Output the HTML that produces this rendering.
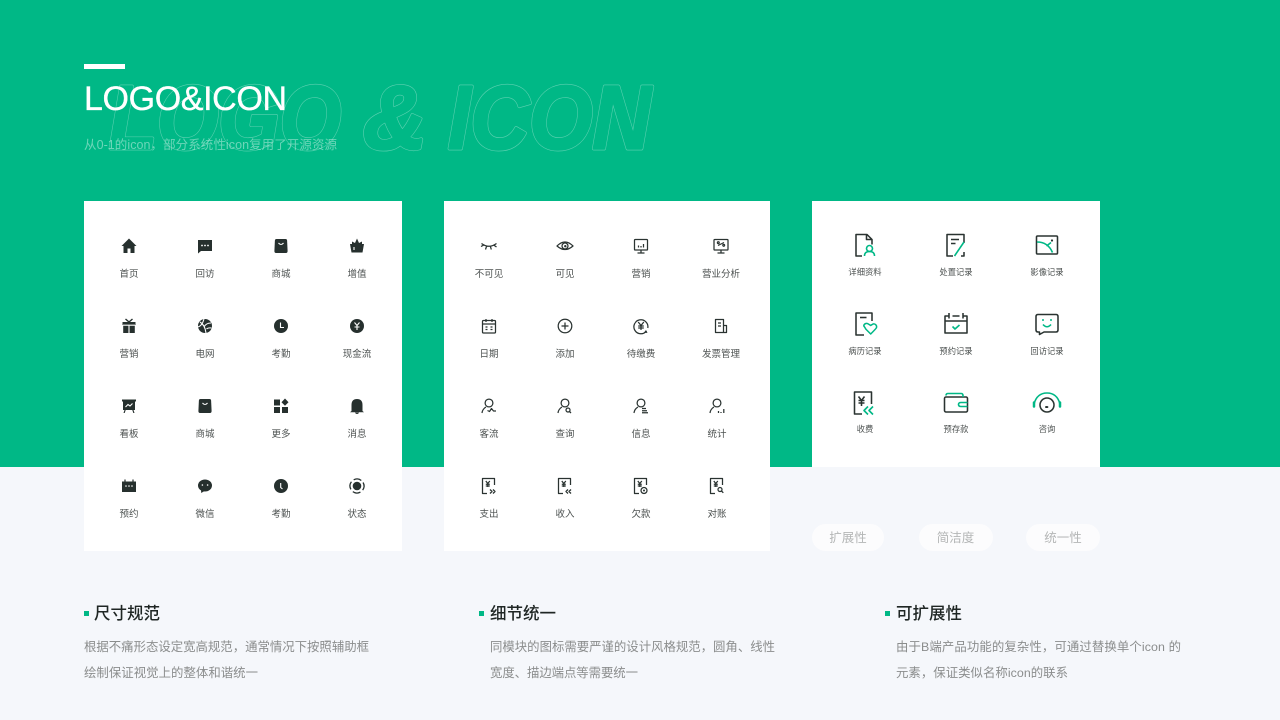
<!DOCTYPE html>
<html lang="zh"><head><meta charset="utf-8"><title>LOGO&amp;ICON</title>
<style>
html,body{margin:0;padding:0;width:1280px;height:720px;overflow:hidden;background:#f5f7fb}
svg{display:block;font-family:"Liberation Sans","Noto Sans CJK SC",sans-serif;filter:blur(.3px)}
.l text{font-size:9.5px;fill:#4c5150;text-anchor:middle}
.m text{font-size:8.3px;fill:#4c5150;text-anchor:middle}
.f{fill:#26302e;stroke:none}
.w{stroke:#fff;fill:none;stroke-width:1.1}
.wf{fill:#fff;stroke:none}
.o{fill:none;stroke:#2a3331;stroke-width:1.25;stroke-linejoin:round}
.b{fill:none;stroke:#2a3331;stroke-width:1.55;stroke-linejoin:round}
.g{fill:none;stroke:#00b886;stroke-width:1.6;stroke-linejoin:round}
.h{font-size:16.5px;font-weight:500;fill:#1f2624}
.p{font-size:12.4px;fill:#8b8d8d}
.pill{font-size:12.5px;fill:#b4b6b6;text-anchor:middle}
.gh1{fill:none;stroke:#fff;stroke-opacity:.36;stroke-width:3.8;stroke-linejoin:round}
.gh2{fill:#00b886;stroke:#00b886;stroke-width:2.6;stroke-linejoin:round}
.gt{font-size:90px;font-weight:700;font-style:italic}
</style></head><body>
<svg width="1280" height="720" viewBox="0 0 1280 720" xmlns="http://www.w3.org/2000/svg">
<defs>
<g id="bag"><path class="f" d="M-4.500-7H4.500Q6-7 6.100-5.500L6.600 5Q6.600 7 5 7H-5Q-6.600 7-6.600 5L-6.100-5.500Q-6-7-4.500-7Z"/><path class="w" d="M-2.500-3Q0 0 2.500-3"/></g>
<g id="doc"><path class="o" d="M-2 7.500H-6.500V-7.500H5.500V-1M-6.500-7.500V7.500"/><path class="o" d="M-3.200-5L-1.200-2.500L.8-5M-1.200-2.500V1M-3.200-1.800H.8M-3.200 0H.8"/></g>
<g id="head"><circle class="o" cx="0" cy="-3" r="3.900"/><path class="o" d="M-7 7Q-6.500 3-3 1"/></g>
</defs>
<rect x="0" y="0" width="1280" height="467" fill="#00b886"/>
<g class="gt">
<text class="gh1" x="109" y="148.500" textLength="232" lengthAdjust="spacingAndGlyphs">LOGO</text>
<text class="gh1" x="363" y="148.500" textLength="64" lengthAdjust="spacingAndGlyphs">&amp;</text>
<text class="gh1" x="448" y="148.500" textLength="203" lengthAdjust="spacingAndGlyphs">ICON</text>
<text class="gh2" x="109" y="148.500" textLength="232" lengthAdjust="spacingAndGlyphs">LOGO</text>
<text class="gh2" x="363" y="148.500" textLength="64" lengthAdjust="spacingAndGlyphs">&amp;</text>
<text class="gh2" x="448" y="148.500" textLength="203" lengthAdjust="spacingAndGlyphs">ICON</text>
</g>
<rect x="84" y="64" width="41" height="5" fill="#fff"/>
<text x="84" y="110" font-size="34" fill="#fff" stroke="#fff" stroke-width=".35" textLength="203">LOGO&amp;ICON</text>
<text x="84" y="149" font-size="12.500" fill="#fff" fill-opacity=".42" textLength="253">从0-1的icon，部分系统性icon复用了开源资源</text>
<rect x="84" y="201" width="318" height="350" fill="#fff"/>
<rect x="444" y="201" width="326" height="350" fill="#fff"/>
<rect x="812" y="201" width="288" height="266" fill="#fff"/>

<g class="l">
<text x="129" y="277">首页</text><text x="205" y="277">回访</text><text x="281" y="277">商城</text><text x="357" y="277">增值</text>
<text x="129" y="357">营销</text><text x="205" y="357">电网</text><text x="281" y="357">考勤</text><text x="357" y="357">现金流</text>
<text x="129" y="437">看板</text><text x="205" y="437">商城</text><text x="281" y="437">更多</text><text x="357" y="437">消息</text>
<text x="129" y="517">预约</text><text x="205" y="517">微信</text><text x="281" y="517">考勤</text><text x="357" y="517">状态</text>
<text x="489" y="277">不可见</text><text x="565" y="277">可见</text><text x="641" y="277">营销</text><text x="721" y="277">营业分析</text>
<text x="489" y="357">日期</text><text x="565" y="357">添加</text><text x="641" y="357">待缴费</text><text x="721" y="357">发票管理</text>
<text x="489" y="437">客流</text><text x="565" y="437">查询</text><text x="641" y="437">信息</text><text x="717" y="437">统计</text>
<text x="489" y="517">支出</text><text x="565" y="517">收入</text><text x="641" y="517">欠款</text><text x="717" y="517">对账</text>
</g>
<g class="m">
<text x="865" y="275">详细资料</text><text x="956" y="275">处置记录</text><text x="1047" y="275">影像记录</text>
<text x="865" y="354">病历记录</text><text x="956" y="354">预约记录</text><text x="1047" y="354">回访记录</text>
<text x="865" y="432">收费</text><text x="956" y="432">预存款</text><text x="1047" y="432">咨询</text>
</g>

<!-- Panel 1 icons -->
<g transform="translate(129,246)"><path class="f" d="M0-7.500L7.500 0H5.500V7H1.500V2.500H-1.500V7H-5.500V0H-7.500Z"/></g>
<g transform="translate(205,246)"><path class="f" d="M-7-6H7V5H-4L-7 7.500Z"/><circle class="wf" cx="-3" cy="-.5" r=".9"/><circle class="wf" cx="0" cy="-.5" r=".9"/><circle class="wf" cx="3" cy="-.5" r=".9"/></g>
<use href="#bag" x="281" y="246"/>
<g transform="translate(357,246)"><path class="f" d="M-7-2H7L5.500 6.500H-5.500ZM-5-2V-4.500L-2-3L0-7.500L2-3L5-4.500V-2Z"/><path class="w" d="M-3 1V4"/></g>
<g transform="translate(129,326)"><path class="f" d="M-6.500-4H6.500V-1H5.800V7H-5.800V-1H-6.500Z"/><path class="w" d="M-6-.8H6M0-1V7"/><path d="M-3.500-7L0-4L3.500-7" fill="none" stroke="#26302e" stroke-width="1.400"/></g>
<g transform="translate(205,326)"><circle class="f" r="7"/><path class="w" d="M-5-4Q0-1 1 7M-1-7Q-3 0 -7 1M6-3Q1-3-1 1M6.500 2Q3 1.500 1.500 3"/></g>
<g transform="translate(281,326)"><circle class="f" r="7"/><path class="w" stroke-width="1.300" d="M-.5-3.500V1.500H3"/></g>
<g transform="translate(357,326)"><circle class="f" r="7"/><path class="w" stroke-width="1.300" d="M-2.500-3.500L0-.5L2.500-3.500M0-.5V4M-2.500 1H2.500"/></g>
<g transform="translate(129,406)"><path class="f" d="M-7-6.500H7V-4.500H6V4H4.500L5.500 7H4.300L3.300 4H-3.300L-4.300 7H-5.500L-4.500 4H-6V-4.500H-7Z"/><path class="w" d="M-3.500 1L-1-1.500L1 0L3.500-2.500"/></g>
<use href="#bag" x="205" y="406"/>
<g transform="translate(281,406)"><rect class="f" x="-7" y="-6.500" width="6" height="6"/><rect class="f" x="-7" y="1" width="6" height="6"/><rect class="f" x="1" y="1" width="6" height="6"/><path class="f" d="M4-7.500L7.500-3.800L4-.2L.5-3.800Z"/></g>
<g transform="translate(357,406)"><path class="f" d="M-5.500 5V-1Q-5.500-7 0-7Q5.500-7 5.500-1V5L7 6.200H-7Z"/><path class="f" d="M-2 6.500H2Q1.500 8 0 8Q-1.500 8-2 6.500Z"/></g>
<g transform="translate(129,486)"><rect class="f" x="-7" y="-4.500" width="14" height="10.500"/><path d="M-4-6.500V-3.500M4-6.500V-3.500" stroke="#26302e" stroke-width="1.200"/><circle class="wf" cx="-3" cy="0" r=".8"/><circle class="wf" cx="0" cy="0" r=".8"/><circle class="wf" cx="3" cy="0" r=".8"/></g>
<g transform="translate(205,486)"><ellipse class="f" cx="0" cy="-.5" rx="7" ry="6"/><path class="f" d="M-4 3L-3.800 7L-.5 5Z"/><circle class="wf" cx="-2.600" cy="-1" r=".8"/><circle class="wf" cx="2.600" cy="-1" r=".8"/></g>
<g transform="translate(281,486)"><circle class="f" r="7"/><path class="w" stroke-width="1.200" d="M-.3-3V1.500L1.500 3"/></g>
<g transform="translate(357,486)"><circle class="f" r="4.300"/><circle r="7" fill="none" stroke="#26302e" stroke-width="1.300" stroke-dasharray="8 3" transform="rotate(-30)"/></g>

<!-- Panel 2 icons -->
<g transform="translate(489,246)"><path class="o" d="M-7.500-2.500Q0 3 7.500-2.500M-5.500-.8L-8 .5M-2.500.5L-3.500 3.500M1.500.8L2.300 3.500M5-.8L7.500 1"/></g>
<g transform="translate(565,246)"><path class="o" stroke-width="1.300" d="M-8 0Q0-8 8 0Q0 7-8 0Z"/><circle class="o" stroke-width="1.500" r="3"/><circle class="f" cx=".3" cy=".2" r="1.200"/></g>
<g transform="translate(641,246)"><rect class="o" x="-6.500" y="-6.500" width="13" height="10.500" rx=".8"/><path class="o" d="M0 4V7M-3.500 7H3.500M-2.500 1.500V-.5M0 1.500V0M2.500 1.500V-2"/></g>
<g transform="translate(721,246)"><rect class="o" x="-7" y="-6.500" width="14" height="10.500" rx=".8"/><path class="o" d="M0 4V7M-3.500 7H3.500M-3-.5L3-3.500"/><circle class="o" stroke-width="1" cx="-2.700" cy="-3.300" r=".9"/><circle class="o" stroke-width="1" cx="2.700" cy="-.7" r=".9"/></g>
<g transform="translate(489,326)"><rect class="o" x="-6.500" y="-5.500" width="13" height="12.500" rx="1"/><path class="o" d="M-6.500-2H6.500M-3-7V-4M3-7V-4M-3.500 1H-1.500M1.500 1H3.500M-3.500 3.500H-1.500M1.500 3.500H3.500"/></g>
<g transform="translate(565,326)"><circle class="o" r="6.800"/><path class="o" d="M-3.500 0H3.500M0-3.500V3.500"/></g>
<g transform="translate(641,326)"><path class="o" stroke-width="1.300" d="M5.500 5A7 7 0 1 1 6.800 2"/><path class="f" d="M6.500 7L3 6.500L5 4Z"/><path class="o" stroke-width="1.500" d="M-2.800-4L0-.5L2.800-4M0-.5V4M-2.800 0H2.800M-2.800 2H2.800"/></g>
<g transform="translate(721,326)"><path class="o" d="M-5.500 6.500V-6.500H2.500V6.500ZM2.500-.5H5.500V6.500H2.500M-3-3H0M-3 0H0"/></g>
<g transform="translate(489,406)"><use href="#head"/><path class="o" d="M-1.500 4.500L.5 5.500L2.500 2.500L4.500 5H7"/></g>
<g transform="translate(565,406)"><use href="#head"/><circle class="o" cx="3" cy="4" r="2"/><path class="o" d="M4.500 5.500L6 7"/></g>
<g transform="translate(641,406)"><use href="#head"/><path class="o" d="M1 2.500H5M1 4.700H6M1 6.800H7"/></g>
<g transform="translate(717,406)"><use href="#head"/><path class="o" d="M1.500 7V5M4 7V6M6.800 7V3"/></g>
<g transform="translate(489,486)"><use href="#doc"/><path class="o" d="M1 3.500L3 5.500L1 7.500M4 3.500L6 5.500L4 7.500"/></g>
<g transform="translate(565,486)"><use href="#doc"/><path class="o" d="M3 3.500L1 5.500L3 7.500M6 3.500L4 5.500L6 7.500"/></g>
<g transform="translate(641,486)"><use href="#doc"/><circle class="o" fill="#fff" cx="3" cy="4.500" r="3"/><circle class="f" cx="3" cy="4.500" r="1"/></g>
<g transform="translate(717,486)"><use href="#doc"/><circle class="o" cx="3" cy="3.500" r="2"/><path class="o" d="M4.500 5L6.300 6.800"/></g>

<!-- Panel 3 icons -->
<g transform="translate(865,245)"><path class="b" d="M-3 11H-9V-10.500H2L7-5.500V-.5M1.500-10V-5.500H6.500"/><circle class="g" cx="4.500" cy="3.500" r="3"/><path class="g" d="M-.5 11Q-.5 6.500 4.500 6.500Q9.500 6.500 9.500 11"/></g>
<g transform="translate(956,245)"><path class="b" d="M-3 11H-9V-10.500H8V-2M8 7V11H5"/><path class="b" d="M-5-5.500H3M-5-1.500H-.5"/><path class="g" d="M-1.500 11L8-3"/></g>
<g transform="translate(1047,245)"><rect class="b" x="-10.500" y="-9" width="21" height="18" rx="1"/><path class="g" d="M-10-3Q1-3 5.500 7.500M-.5 1L4-2.500"/><circle cx="5" cy="-4.500" r="1.100" fill="#26302e"/></g>
<g transform="translate(865,324)"><path class="b" d="M-1 11H-9V-11H7V-3"/><path class="b" d="M-5-6.500H1.500"/><path class="g" d="M6 10.500L1 5.500Q-.5 3-1.300 2A3 3 0 0 1 3.500 0L6 1.500L8.500 0A3 3 0 0 1 12 4Q11.500 5 6 10.500Z" transform="scale(.95)"/></g>
<g transform="translate(956,324)"><path class="b" d="M-7-8H-11V9H11V-8H7M-3.500-8H3.500M-7-11V-5.500M7-11V-5.500M-11-3H11"/><path class="g" d="M-3.500 2.500L-1 5L3.500 1"/></g>
<g transform="translate(1047,324)"><path class="b" d="M-9-9.500H9Q11-9.500 11-7.500V6Q11 8 9 8H-3L-7.500 10.500V8H-9Q-11 8-11 6V-7.500Q-11-9.500-9-9.500Z"/><path class="g" d="M-4 0.500Q0 5 4 .5"/><path d="M-4-5V-3M4-5V-3" stroke="#00b886" stroke-width="1.500"/></g>
<g transform="translate(865,403)"><path class="b" d="M-3 11H-10.500V-11H6.500V1"/><path class="b" d="M-6.500-6.500L-3.500-2.500L-.5-6.500M-3.500-2.500V3M-6.500-2.500H-.5M-6.500 0H-.5"/><path class="g" stroke-width="1.700" d="M3 4L-1 8L3 12M8 4L4 8L8 12" transform="translate(0,-.5)"/></g>
<g transform="translate(956,403)"><rect class="b" x="-11.500" y="-6" width="23" height="15" rx="1.500"/><path class="g" d="M-10-7.500Q-10-9.500-8-9.500H5Q7-9.500 7-7.500V-6"/><path class="g" d="M11.500-.5H5Q2.500-.5 2.500 1.500Q2.500 3.500 5 3.500H11.500"/></g>
<g transform="translate(1047,403)"><circle class="b" cy="2" r="7"/><ellipse cx="-.3" cy="4" rx="1.700" ry="1" fill="#26302e"/><path class="g" stroke-width="1.600" d="M-13 1Q-10-10 0-10Q10-10 13 1"/><path d="M-13-.5V3.500M13-.5V3.500" stroke="#00b886" stroke-width="2.500" stroke-linecap="round"/></g>

<!-- Pills -->
<rect x="812" y="524" width="72" height="27" rx="13.500" fill="#fcfcfd"/>
<rect x="919" y="524" width="74" height="27" rx="13.500" fill="#fcfcfd"/>
<rect x="1026" y="524" width="74" height="27" rx="13.500" fill="#fcfcfd"/>
<text class="pill" x="848" y="542">扩展性</text>
<text class="pill" x="955.500" y="542">简洁度</text>
<text class="pill" x="1063" y="542">统一性</text>

<!-- Bottom text -->
<rect x="84" y="611" width="5" height="5" fill="#00b886"/>
<rect x="479" y="611" width="5" height="5" fill="#00b886"/>
<rect x="885" y="611" width="5" height="5" fill="#00b886"/>
<text class="h" x="94" y="619" textLength="66">尺寸规范</text>
<text class="h" x="490" y="619" textLength="66">细节统一</text>
<text class="h" x="896" y="619" textLength="66">可扩展性</text>
<text class="p" x="84" y="651" textLength="285">根据不痛形态设定宽高规范，通常情况下按照辅助框</text>
<text class="p" x="84" y="677" textLength="174">绘制保证视觉上的整体和谐统一</text>
<text class="p" x="490" y="651" textLength="285">同模块的图标需要严谨的设计风格规范，圆角、线性</text>
<text class="p" x="490" y="677" textLength="148">宽度、描边端点等需要统一</text>
<text class="p" x="896" y="651" textLength="285">由于B端产品功能的复杂性，可通过替换单个icon 的</text>
<text class="p" x="896" y="677" textLength="172">元素，保证类似名称icon的联系</text>
</svg>
</body></html>
